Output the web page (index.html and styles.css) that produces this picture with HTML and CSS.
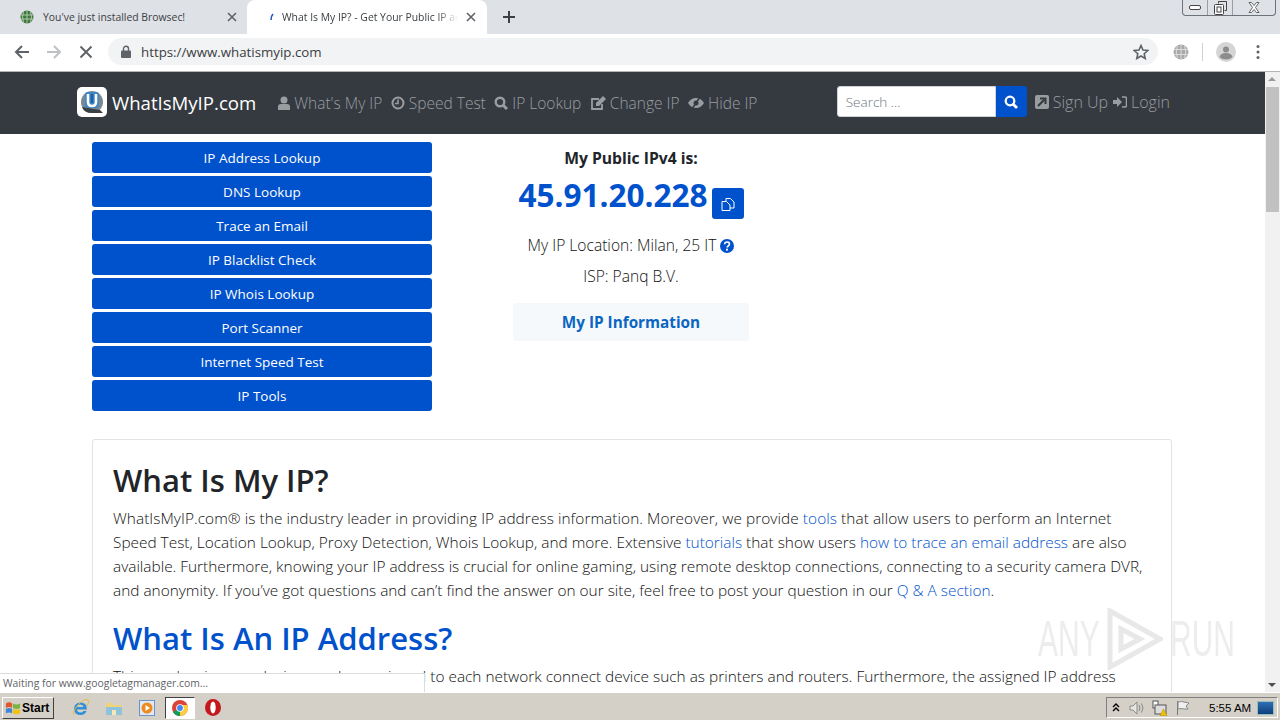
FILE: index.html
```html
<!DOCTYPE html>
<html lang="en">
<head>
  <meta charset="UTF-8">
  <title>What Is My IP? - Get Your Public IP Address</title>
  <link rel="stylesheet" href="styles.css">
</head>
<body>
  <div class="tabstrip">
    <div class="tab">
      <svg class="favicon" viewBox="0 0 14 14"><circle cx="7" cy="7" r="6.5" fill="#3c7a3c"/><path d="M1 5h12M1 9h12M7 .5v13M3.5 2q-2 5 0 10M10.500 2q2 5 0 10" stroke="#c9d6c4" stroke-width=".8" fill="none"/></svg>
      <span class="tab-title">You've just installed Browsec!</span>
      <svg class="tab-close" viewBox="0 0 10 10"><path d="M1 1l8 8M9 1l-8 8" stroke="#5f6368" stroke-width="1.600"/></svg>
    </div>
    <div class="tab active">
      <svg class="spinner" viewBox="0 0 4 8"><path d="M1 7Q1 3 3 1" stroke="#1a56c4" stroke-width="1.600" fill="none"/></svg>
      <span class="tab-title fade">What Is My IP? - Get Your Public IP address</span>
      <svg class="tab-close" viewBox="0 0 10 10"><path d="M1 1l8 8M9 1l-8 8" stroke="#5f6368" stroke-width="1.600"/></svg>
    </div>
    <svg class="new-tab" viewBox="0 0 12 12"><path d="M6 0v12M0 6h12" stroke="#3c4043" stroke-width="2"/></svg>
    <div class="win-buttons">
      <span class="win-btn"><svg width="12" height="6" viewBox="0 0 12 6"><rect x=".5" y=".5" width="11" height="4" rx="1.500" fill="#fff" stroke="#444"/></svg></span>
      <span class="win-btn"><svg width="13" height="14" viewBox="0 0 13 14"><path d="M4.500 2.500V.5h8v9h-2" fill="none" stroke="#444"/><rect x=".5" y="3.500" width="9" height="10" rx="1" fill="#fff" stroke="#444"/><rect x="3" y="6" width="4" height="5" fill="none" stroke="#444"/></svg></span>
      <span class="win-btn wide"><svg width="12" height="11" viewBox="0 0 12 11"><path d="M1 .5h2.500L6 3.500 8.500.5H11L7.500 5.500 11 10.500H8.500L6 7.500 3.500 10.500H1L4.500 5.500z" fill="#fff" stroke="#444" stroke-width=".8"/></svg></span>
    </div>
  </div>

  <div class="toolbar">
    <svg class="tool-icon" viewBox="0 0 16 16"><path d="M15 8H2M8 2L2 8l6 6" stroke="#5f6368" stroke-width="2" fill="none"/></svg>
    <svg class="tool-icon" viewBox="0 0 16 16"><path d="M1 8h13M8 2l6 6-6 6" stroke="#bdc1c6" stroke-width="2" fill="none"/></svg>
    <svg class="tool-icon" viewBox="0 0 16 16"><path d="M2.500 2.500l11 11M13.500 2.500l-11 11" stroke="#5f6368" stroke-width="2"/></svg>
    <div class="omnibox">
      <svg class="lock" viewBox="0 0 10 13"><path d="M2.500 6V3.800a2.500 2.500 0 0 1 5 0V6" fill="none" stroke="#5f6368" stroke-width="1.400"/><rect y="5.500" width="10" height="7.500" rx="1" fill="#5f6368"/></svg>
      <span class="url">https://www.whatismyip.com</span>
      <svg class="star" viewBox="0 0 16 16"><path d="M8 1.500l2 4.500 4.800.5-3.600 3.200 1 4.800L8 12l-4.200 2.500 1-4.800L1.200 6.500 6 6z" fill="none" stroke="#5f6368" stroke-width="1.600"/></svg>
    </div>
    <svg class="ext-globe" viewBox="0 0 16 16"><circle cx="8" cy="8" r="7.500" fill="#aaa"/><path d="M1 5.500h14M1 10.500h14M8 .5v15M4.500 1.500q-2.500 6.500 0 13M11.500 1.500q2.500 6.500 0 13" stroke="#e6e6e6" stroke-width=".8" fill="none"/></svg>
    <span class="tool-sep"></span>
    <svg class="avatar" viewBox="0 0 20 20"><circle cx="10" cy="10" r="10" fill="#d5d5d5"/><circle cx="10" cy="7.500" r="3" fill="#8c8c8c"/><path d="M3.500 15q1-4 6.500-4t6.500 4q-2.500 2.500-6.500 2.500t-6.500-2.500z" fill="#8c8c8c"/></svg>
    <svg class="dots" viewBox="0 0 4 16"><circle cx="2" cy="2.500" r="1.500" fill="#5f6368"/><circle cx="2" cy="8" r="1.500" fill="#5f6368"/><circle cx="2" cy="13.500" r="1.500" fill="#5f6368"/></svg>
  </div>

  <div class="viewport">
    <main class="page">
      <nav class="navbar">
        <a class="brand">
          <svg class="brand-logo" viewBox="0 0 30 30"><rect width="30" height="30" rx="5" fill="#fff"/><circle cx="15" cy="15" r="11" fill="#7d8790"/><path d="M5 20q2 6 10 6h11l-3-3z" fill="#3a3f44"/><rect x="8" y="5" width="14" height="16" rx="3" fill="#3f86c6"/><path d="M11 7v8q0 4 4 4t4-4V7" fill="none" stroke="#fff" stroke-width="2.600"/><path d="M15 7v9" stroke="#1f5fa8" stroke-width="2.400"/></svg>
          <span>WhatIsMyIP.com</span>
        </a>
        <ul class="nav-links">
          <li><svg class="glyph" viewBox="0 0 12 14"><circle cx="6" cy="4" r="3.500"/><path d="M0 14V11q0-3 3-3h6q3 0 3 3v3z"/></svg>What's My IP</li>
          <li><svg class="glyph w14" viewBox="0 0 14 14"><circle cx="7" cy="7" r="5.500" fill="none" stroke-width="2"/><path d="M7 3.500V7.500H4" fill="none" stroke-width="1.600"/></svg>Speed Test</li>
          <li><svg class="glyph w14" viewBox="0 0 14 14"><circle cx="6" cy="6" r="4.300" fill="none" stroke-width="2.400"/><path d="M9 9l4 4" fill="none" stroke-width="3"/></svg>IP Lookup</li>
          <li><svg class="glyph wide" viewBox="0 0 16 14"><path d="M9 3H2v10h10V8" fill="none" stroke-width="1.800"/><path d="M6 7l7-7 3 3-7 7H6z"/></svg>Change IP</li>
          <li><svg class="glyph wide" viewBox="0 0 16 14"><path d="M0 7q3-5 8-5t8 5q-3 5-8 5t-8-5z"/><circle cx="8" cy="7" r="2.500" fill="#343a40" stroke="none"/><path d="M12 1L4 13" fill="none" stroke="#343a40" stroke-width="1.500"/></svg>Hide IP</li>
        </ul>
        <form class="search">
          <input class="search-input" type="text" placeholder="Search ...">
          <button class="search-btn" type="button"><svg viewBox="0 0 14 14" width="14" height="14"><circle cx="6" cy="6" r="4.300" fill="none" stroke="#fff" stroke-width="2.300"/><path d="M9 9l4 4" stroke="#fff" stroke-width="2.800"/></svg></button>
        </form>
        <ul class="nav-links account">
          <li><svg class="glyph" viewBox="0 0 14 14"><rect width="14" height="14" rx="2"/><path d="M3 11l6-6M5 3.500h5.500V9" fill="none" stroke="#343a40" stroke-width="2"/></svg>Sign Up</li>
          <li><svg class="glyph" viewBox="0 0 14 14"><path d="M0 5h4V2l5 5-5 5V9H0z"/><path d="M9 2h3q1.500 0 1.500 1.500v7Q13.500 12 12 12H9" fill="none" stroke-width="1.600"/></svg>Login</li>
        </ul>
      </nav>

      <section class="top-row">
        <ul class="tool-list">
          <li>IP Address Lookup</li>
          <li>DNS Lookup</li>
          <li>Trace an Email</li>
          <li>IP Blacklist Check</li>
          <li>IP Whois Lookup</li>
          <li>Port Scanner</li>
          <li>Internet Speed Test</li>
          <li>IP Tools</li>
        </ul>
        <div class="ip-box">
          <p class="ip-label">My Public IPv4 is:</p>
          <div class="ip-line">
            <span class="ip-value">45.91.20.228</span>
            <button class="copy-btn" type="button"><svg viewBox="0 0 14 14" width="14" height="14"><path d="M5 4V1.500h4.500L13 5v6H9" fill="none" stroke="#fff"/><path d="M1 4.500h4.500L9 8v5.500H1z" fill="none" stroke="#fff"/></svg></button>
          </div>
          <p class="ip-info">My IP Location: Milan, 25 IT <svg class="help" viewBox="0 0 14 14"><circle cx="7" cy="7" r="7" fill="#0052cc"/><path d="M4.700 5.300q0-2.300 2.400-2.300t2.300 2q0 1.200-1.200 1.900-1 .5-1 1.500" fill="none" stroke="#fff" stroke-width="1.700"/><rect x="6" y="9.700" width="1.900" height="1.900" fill="#fff"/></svg></p>
          <p class="ip-info">ISP: Panq B.V.</p>
          <a class="info-link">My IP Information</a>
        </div>
      </section>

      <article class="card">
        <h1>What Is My IP?</h1>
        <p class="intro">WhatIsMyIP.com&reg; is the industry leader in providing IP address information. Moreover, we provide <a>tools</a> that allow users to perform an Internet Speed Test, Location Lookup, Proxy Detection, Whois Lookup, and more. Extensive <a>tutorials</a> that show users <a>how to trace an email address</a> are also available. Furthermore, knowing your IP address is crucial for online gaming, using remote desktop connections, connecting to a security camera DVR, and anonymity. If you&#8217;ve got questions and can&#8217;t find the answer on our site, feel free to post your question in our <a>Q &amp; A section</a>.</p>
        <h2>What Is An IP Address?</h2>
        <p>This number is an exclusive number assigned to each network connect device such as printers and routers. Furthermore, the assigned IP address</p>
      </article>
    </main>

    <div class="scrollbar">
      <span class="arrow up"></span>
      <span class="thumb"></span>
      <span class="arrow down"></span>
    </div>

    <div class="status-bubble">Waiting for www.googletagmanager.com...</div>

    <div class="watermark">
      <span class="wm-text">ANY</span>
      <svg width="56" height="62" viewBox="0 0 56 62"><path d="M3 3l50 28L3 59zM14 21l19 10-19 10z" fill="none" stroke="#e8e8e8" stroke-width="5"/></svg>
      <span class="wm-text">RUN</span>
    </div>
  </div>

  <footer class="taskbar">
    <div class="start-btn">
      <svg width="16" height="16" viewBox="0 0 18 16"><path d="M1 3q4-3 7 0v5q-3-2-7 0z" fill="#e2572b"/><path d="M9 3q4 2 8 0v5q-4 2-8 0z" fill="#7cb342"/><path d="M1 9q4-2 7 0v5q-3-2-7 0z" fill="#3f86d6"/><path d="M9 9q4 2 8 0v5q-4 2-8 0z" fill="#f4c20d"/></svg>
      <span>Start</span>
    </div>
    <div class="quick-launch">
      <span class="task-icon"><svg width="18" height="18" viewBox="0 0 18 18"><path d="M15 10.500H5q.300 3 3.500 3 2 0 3-1.500h3q-1.500 4-6 4-6 0-6.500-6 0-6 6.500-6.500 6.500 0 6.500 7zM5 8h6.500q-.500-2.500-3.200-2.500T5 8z" fill="#2f8fd8"/><path d="M2 16Q0 13 6 6t10-5q2 2-1 6" fill="none" stroke="#e9b93c" stroke-width="1"/></svg></span>
      <span class="task-icon"><svg width="18" height="16" viewBox="0 0 18 16"><path d="M1 3h6l2 2h8v10H1z" fill="#efd27a"/><path d="M1 7h16v8H1z" fill="#8fc3d9"/><rect x="7" y="10" width="4" height="5" fill="#f4e7b8"/></svg></span>
      <span class="task-icon"><svg width="16" height="16" viewBox="0 0 16 16"><rect x=".5" y=".5" width="15" height="15" fill="#dfe8f5" stroke="#6f93c4"/><circle cx="8" cy="8" r="5.500" fill="#ee8a1d"/><path d="M6.500 5v6L11 8z" fill="#fff"/></svg></span>
      <span class="task-icon current"><svg width="16" height="16" viewBox="0 0 16 16"><circle cx="8" cy="8" r="8" fill="#db4437"/><path d="M8 8L1 12A8 8 0 0 0 8 16z" fill="#0f9d58"/><path d="M8 8l0 8A8 8 0 0 0 15.500 5H8z" fill="#ffcd40"/><circle cx="8" cy="8" r="3.800" fill="#fff"/><circle cx="8" cy="8" r="2.900" fill="#4285f4"/></svg></span>
      <span class="task-icon"><svg width="16" height="17" viewBox="0 0 16 17"><ellipse cx="8" cy="8.500" rx="8" ry="8.500" fill="#c4161c"/><ellipse cx="8" cy="8.500" rx="2.700" ry="6" fill="#fff"/></svg></span>
    </div>
    <div class="tray">
      <svg width="8" height="9" viewBox="0 0 8 9"><path d="M1 4l3-3 3 3M1 8l3-3 3 3" fill="none" stroke="#000" stroke-width="1.400"/></svg>
      <svg class="tray-speaker" width="16" height="14" viewBox="0 0 16 14"><path d="M1 5h3l4-4v12L4 9H1z" fill="#e9e6e0" stroke="#8a8a8a"/><path d="M10 4q2 3 0 6M12.500 2.500q3 4.500 0 9" fill="none" stroke="#8a8a8a"/></svg>
      <svg width="16" height="16" viewBox="0 0 16 16"><rect x="1" y="1" width="5" height="7" fill="#fff" stroke="#555"/><rect x="3" y="5" width="11" height="9" fill="#dcdcdc" stroke="#555"/><path d="M8 15.500l3.500-6.500 3.500 6.500z" fill="#f2c200" stroke="#a88a00" stroke-width=".5"/></svg>
      <svg width="16" height="16" viewBox="0 0 16 16"><path d="M2.500 1v14" stroke="#777"/><path d="M3 2q4-1 6 0l5 1-3 3 2 3H9Q6 8 3 9z" fill="#efefef" stroke="#888"/></svg>
      <span class="clock">5:55 AM</span>
      <span class="show-desktop"></span>
    </div>
  </footer>
</body>
</html>
```

FILE: styles.css
```css
* {
  margin: 0;
  padding: 0;
  box-sizing: border-box;
}
html, body {
  height: 100%;
  overflow: hidden;
}
body {
  display: flex;
  flex-direction: column;
  font-family: "Open Sans", sans-serif;
  background: #d4d0c8;
}
ul {
  list-style: none;
}

/* browser chrome */
.tabstrip {
  display: flex;
  align-items: center;
  height: 34px;
  padding-left: 7px;
  background: #dee1e6;
  position: relative;
}
.tab {
  display: flex;
  align-items: center;
  width: 240px;
  height: 34px;
  padding: 0 10px 0 13px;
  font: 10.400px "Open Sans", sans-serif;
  color: #3c4043;
}
.tab.active {
  background: #fff;
  border-radius: 8px 8px 0 0;
  padding-right: 11px;
}
.favicon {
  width: 14px;
  height: 14px;
  margin-right: 9px;
}
.spinner {
  width: 4px;
  height: 8px;
  margin: 0 8px 0 10px;
}
.tab-title {
  flex: 1;
  white-space: nowrap;
  overflow: hidden;
}
.tab-title.fade {
  margin-right: 8px;
  -webkit-mask-image: linear-gradient(to right, #000 88%, transparent);
  mask-image: linear-gradient(to right, #000 88%, transparent);
}
.tab-close {
  width: 10px;
  height: 10px;
}
.new-tab {
  width: 12px;
  height: 12px;
  margin-left: 16px;
}
.win-buttons {
  position: absolute;
  top: 0;
  right: 4px;
  display: flex;
  height: 16px;
  border: 1px solid #6d7178;
  border-top: 0;
  border-radius: 0 0 4px 4px;
}
.win-btn {
  display: flex;
  align-items: center;
  justify-content: center;
  width: 25px;
  border-right: 1px solid #9a9da3;
}
.win-btn.wide {
  width: 42px;
  border-right: 0;
}
.toolbar {
  display: flex;
  align-items: center;
  height: 38px;
  padding: 0 0 2px 14px;
  background: #fff;
  border-bottom: 1px solid #b5b5b5;
}
.tool-icon {
  width: 16px;
  height: 16px;
  margin-right: 16px;
}
.omnibox {
  display: flex;
  align-items: center;
  width: 1050px;
  height: 27px;
  margin-left: -2px;
  padding: 0 9px 0 13px;
  border-radius: 14px;
  background: #f1f3f4;
}
.lock {
  width: 10px;
  height: 13px;
  margin-right: 10px;
}
.url {
  flex: 1;
  font-size: 13.300px;
  color: #3c4043;
}
.star {
  width: 16px;
  height: 16px;
}
.ext-globe {
  width: 16px;
  height: 16px;
  margin-left: 15px;
}
.tool-sep {
  width: 1px;
  height: 18px;
  margin: 0 13px;
  background: #d0d0d0;
}
.avatar {
  width: 20px;
  height: 20px;
}
.dots {
  width: 4px;
  height: 16px;
  margin-left: 20px;
}

/* page */
.viewport {
  flex: 1;
  display: flex;
  position: relative;
  min-height: 0;
  background: #fff;
}
.page {
  flex: 1;
  min-width: 0;
  overflow: hidden;
  background: #fff;
  color: #111;
  font-weight: 300;
}
.navbar {
  display: flex;
  align-items: center;
  height: 62px;
  padding: 0 77px;
  background: #343a40;
  color: #9a9da0;
}
.brand {
  display: flex;
  align-items: center;
  gap: 5px;
  margin: 0 22px 2px 0;
  font-size: 18.600px;
  font-weight: 400;
  color: #fff;
}
.brand-logo {
  width: 30px;
  height: 30px;
}
.nav-links {
  display: flex;
  gap: 8.500px;
  font-size: 15.500px;
  white-space: nowrap;
}
.nav-links li {
  display: flex;
  align-items: center;
  gap: 4px;
}
.glyph {
  width: 12px;
  height: 14px;
  fill: #9a9da0;
  stroke: #9a9da0;
  stroke-width: 0;
}
.glyph.w14 {
  width: 14px;
}
.glyph.wide {
  width: 16px;
}
.search {
  display: flex;
  margin-left: auto;
  margin-bottom: 3px;
}
.search-input {
  width: 159px;
  height: 31px;
  padding: 0 8px;
  border: 1px solid #ced4da;
  border-radius: 3px 0 0 3px;
  background: #fff;
  font: 300 13.500px "Open Sans", sans-serif;
}
.search-input::placeholder {
  color: #6c757d;
}
.search-btn {
  display: flex;
  align-items: center;
  justify-content: center;
  width: 31px;
  height: 31px;
  border: 0;
  border-radius: 0 3px 3px 0;
  background: #0052cc;
}
.account {
  gap: 5px;
  margin-left: 8px;
  padding-bottom: 3px;
  font-size: 16px;
  margin-right: 18px;
}
.account .glyph {
  width: 14px;
  height: 14px;
}
.top-row {
  display: flex;
  height: 305px;
  padding: 8px 0 0 92px;
}
.tool-list {
  display: flex;
  flex-direction: column;
  gap: 3px;
  width: 340px;
}
.tool-list li {
  height: 31px;
  padding-top: 1px;
  line-height: 31px;
  border-radius: 3px;
  background: #0052cc;
  color: #fff;
  font-size: 13.500px;
  font-weight: 400;
  text-align: center;
}
.ip-box {
  display: flex;
  flex-direction: column;
  align-items: center;
  width: 236px;
  margin-left: 81px;
  font-size: 15.600px;
}
.ip-label {
  margin-top: 5px;
  font-size: 15.700px;
  font-weight: 700;
  color: #212529;
}
.ip-line {
  display: flex;
  align-items: flex-end;
  gap: 4px;
  margin-top: 4px;
}
.ip-value {
  font-size: 31.500px;
  line-height: 44px;
  font-weight: 700;
  color: #0052cc;
}
.copy-btn {
  display: flex;
  align-items: center;
  justify-content: center;
  width: 32px;
  height: 31px;
  margin-bottom: -2px;
  border: 0;
  border-radius: 3px;
  background: #0052cc;
}
.ip-info {
  margin-top: 11px;
  line-height: 20px;
  white-space: nowrap;
}
.ip-line + .ip-info {
  margin-top: 18px;
}
.help {
  width: 14px;
  height: 14px;
  vertical-align: -2px;
}
.info-link {
  width: 236px;
  height: 38px;
  margin-top: 17px;
  border-radius: 3px;
  background: #f6f9fc;
  color: #0a66c2;
  font-size: 15.300px;
  font-weight: 700;
  line-height: 38px;
  text-align: center;
}
.card {
  height: 300px;
  margin: 0 93px 0 92px;
  padding: 20px;
  border: 1px solid #e3e3e3;
  border-radius: 3px 3px 0 0;
}
.card h1 {
  font-size: 31px;
  font-weight: 600;
  line-height: 40px;
  color: #212529;
}
.card h2 {
  margin: 15px 0 4px;
  font-size: 31px;
  font-weight: 600;
  line-height: 40px;
  color: #0052cc;
}
.card p {
  margin-top: 7px;
  font-size: 15.400px;
  line-height: 24px;
}
.card .intro::first-line {
  letter-spacing: .06px;
}
.card a {
  color: #0052cc;
}

/* scrollbar */
.scrollbar {
  display: flex;
  flex-direction: column;
  width: 15px;
  background: #f1f1f1;
}
.arrow {
  height: 15px;
  position: relative;
}
.arrow::after {
  content: "";
  position: absolute;
  left: 3px;
  border-left: 4px solid transparent;
  border-right: 4px solid transparent;
}
.arrow.up::after {
  top: 5px;
  border-bottom: 4px solid #9a9a9a;
}
.arrow.down::after {
  top: 6px;
  border-top: 4px solid #505050;
}
.thumb {
  height: 125px;
  margin: 0 1px;
  background: #c1c1c1;
}
.arrow.down {
  margin-top: auto;
}

.status-bubble {
  position: absolute;
  left: 0;
  bottom: 0;
  width: 425px;
  height: 19px;
  padding-left: 3px;
  background: #fff;
  border-top: 1px solid #dadce0;
  border-right: 1px solid #dadce0;
  font: 10.400px/18px "Open Sans", sans-serif;
  color: #5f6368;
}
.watermark {
  position: absolute;
  right: 48px;
  bottom: 22px;
  display: flex;
  align-items: center;
  gap: 7px;
  pointer-events: none;
}
.wm-text {
  width: 62px;
  font: 400 50px "Liberation Sans", sans-serif;
  color: #ededed;
  white-space: nowrap;
  transform: scaleX(.6);
  transform-origin: left center;
}

/* windows taskbar */
.taskbar {
  display: flex;
  align-items: center;
  height: 28px;
  padding: 2px 2px 0 2px;
  background: #d4d0c8;
  border-top: 1px solid #fff;
  box-shadow: inset 0 1px 0 #d4d0c8;
}
.start-btn {
  display: flex;
  align-items: center;
  gap: 1px;
  width: 52px;
  height: 22px;
  padding-left: 2px;
  border: 1px solid;
  border-color: #fff #404040 #404040 #fff;
  font: 700 12px "Liberation Sans", sans-serif;
  color: #000;
}
.quick-launch {
  display: flex;
  align-items: center;
  margin-left: 12px;
  gap: 3px;
}
.task-icon {
  display: flex;
  align-items: center;
  justify-content: center;
  width: 30px;
  height: 22px;
}
.task-icon.current {
  background: #fff;
  border: 1px solid;
  border-color: #404040 #fff #fff #404040;
}
.tray {
  display: flex;
  align-items: center;
  gap: 7px;
  width: 172px;
  height: 21px;
  margin-left: auto;
  padding-left: 5px;
  border: 1px solid;
  border-color: #808080 #fff #fff #808080;
  font: 11.500px "Liberation Sans", sans-serif;
  color: #000;
}
.tray svg {
  flex: none;
}
.tray-speaker {
  margin-left: 2px;
}
.clock {
  flex: none;
  width: 41px;
  margin-left: 11px;
  white-space: nowrap;
}
.show-desktop {
  flex: none;
  width: 17px;
  height: 14px;
  background: linear-gradient(#2f6fb5, #0c3f7c);
  border: 1px solid #9bb;
}
```
